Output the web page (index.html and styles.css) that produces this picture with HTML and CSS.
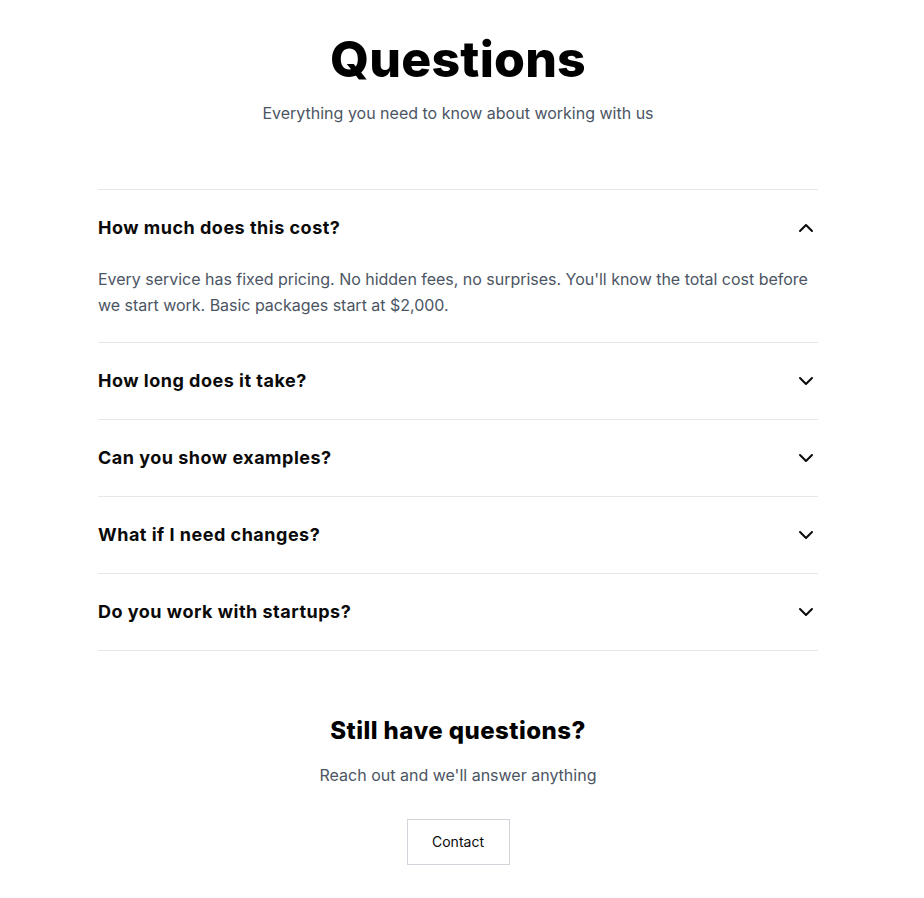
FILE: index.html
```html
<!DOCTYPE html>
<html lang="en">
<head>
<meta charset="utf-8">
<title>Questions</title>
<link rel="stylesheet" href="styles.css">
</head>
<body>
<main class="page">
  <header class="intro">
    <h1 class="title">Questions</h1>
    <p class="subtitle">Everything you need to know about working with us</p>
  </header>

  <section class="faq">
    <div class="item open">
      <div class="question">
        <span class="q-text">How much does this cost?</span>
        <svg class="chev" viewBox="0 0 24 24" width="24" height="24"><path d="m6 15 6-6 6 6"/></svg>
      </div>
      <p class="answer">Every service has fixed pricing. No hidden fees, no surprises. You'll know the total cost before we start work. Basic packages start at $2,000.</p>
    </div>
    <div class="item">
      <div class="question">
        <span class="q-text">How long does it take?</span>
        <svg class="chev" viewBox="0 0 24 24" width="24" height="24"><path d="m6 9 6 6 6-6"/></svg>
      </div>
    </div>
    <div class="item">
      <div class="question">
        <span class="q-text">Can you show examples?</span>
        <svg class="chev" viewBox="0 0 24 24" width="24" height="24"><path d="m6 9 6 6 6-6"/></svg>
      </div>
    </div>
    <div class="item">
      <div class="question">
        <span class="q-text">What if I need changes?</span>
        <svg class="chev" viewBox="0 0 24 24" width="24" height="24"><path d="m6 9 6 6 6-6"/></svg>
      </div>
    </div>
    <div class="item">
      <div class="question">
        <span class="q-text">Do you work with startups?</span>
        <svg class="chev" viewBox="0 0 24 24" width="24" height="24"><path d="m6 9 6 6 6-6"/></svg>
      </div>
    </div>
  </section>

  <section class="cta">
    <h2 class="cta-title">Still have questions?</h2>
    <p class="cta-text">Reach out and we'll answer anything</p>
    <button class="btn" type="button">Contact</button>
  </section>
</main>
</body>
</html>
```

FILE: styles.css
```css
* { box-sizing: border-box; }

html, body {
  margin: 0;
  padding: 0;
  background: #ffffff;
}

body {
  font-family: Inter, "Liberation Sans", sans-serif;
  color: #0a0a0a;
  padding-right: 8px;
}

.page {
  max-width: 720px;
  margin: 0 auto;
  padding: 29px 0 40px;
}

.intro {
  text-align: center;
  margin-bottom: 64px;
}

.title {
  font-family: Inter, "Liberation Sans", sans-serif;
  font-weight: 800;
  font-size: 50px;
  line-height: 60px;
  letter-spacing: 0.2px;
  margin: 0 0 12px;
  color: #000;
}

.subtitle {
  margin: 0;
  font-size: 16px;
  line-height: 24px;
  color: #4b5563;
}

.faq {
  border-top: 1px solid #e5e7eb;
}

.item {
  border-bottom: 1px solid #e5e7eb;
  padding: 24px 0;
}

.question {
  display: flex;
  align-items: center;
  justify-content: space-between;
  height: 28px;
}

.q-text {
  font-weight: 700;
  font-size: 18px;
  line-height: 28px;
  letter-spacing: 0.5px;
  color: #0a0a0a;
}

.chev {
  fill: none;
  stroke: #0a0a0a;
  stroke-width: 2;
  stroke-linecap: round;
  stroke-linejoin: round;
  flex: none;
}

.answer {
  margin: 24px 0 0;
  font-size: 16px;
  line-height: 26px;
  letter-spacing: -0.02px;
  color: #4b5563;
}

.cta {
  text-align: center;
  padding-top: 64px;
}

.cta-title {
  margin: 0 0 16px;
  font-weight: 800;
  font-size: 24px;
  line-height: 32px;
  letter-spacing: 0.45px;
  color: #000;
}

.cta-text {
  margin: 0 0 32px;
  font-size: 16px;
  line-height: 24px;
  color: #4b5563;
}

.btn {
  font-family: Inter, "Liberation Sans", sans-serif;
  font-size: 14px;
  line-height: 20px;
  color: #0a0a0a;
  background: #fff;
  border: 1px solid #d1d5db;
  padding: 12px 24px;
  width: 103px;
  height: 46px;
  cursor: pointer;
}
```
